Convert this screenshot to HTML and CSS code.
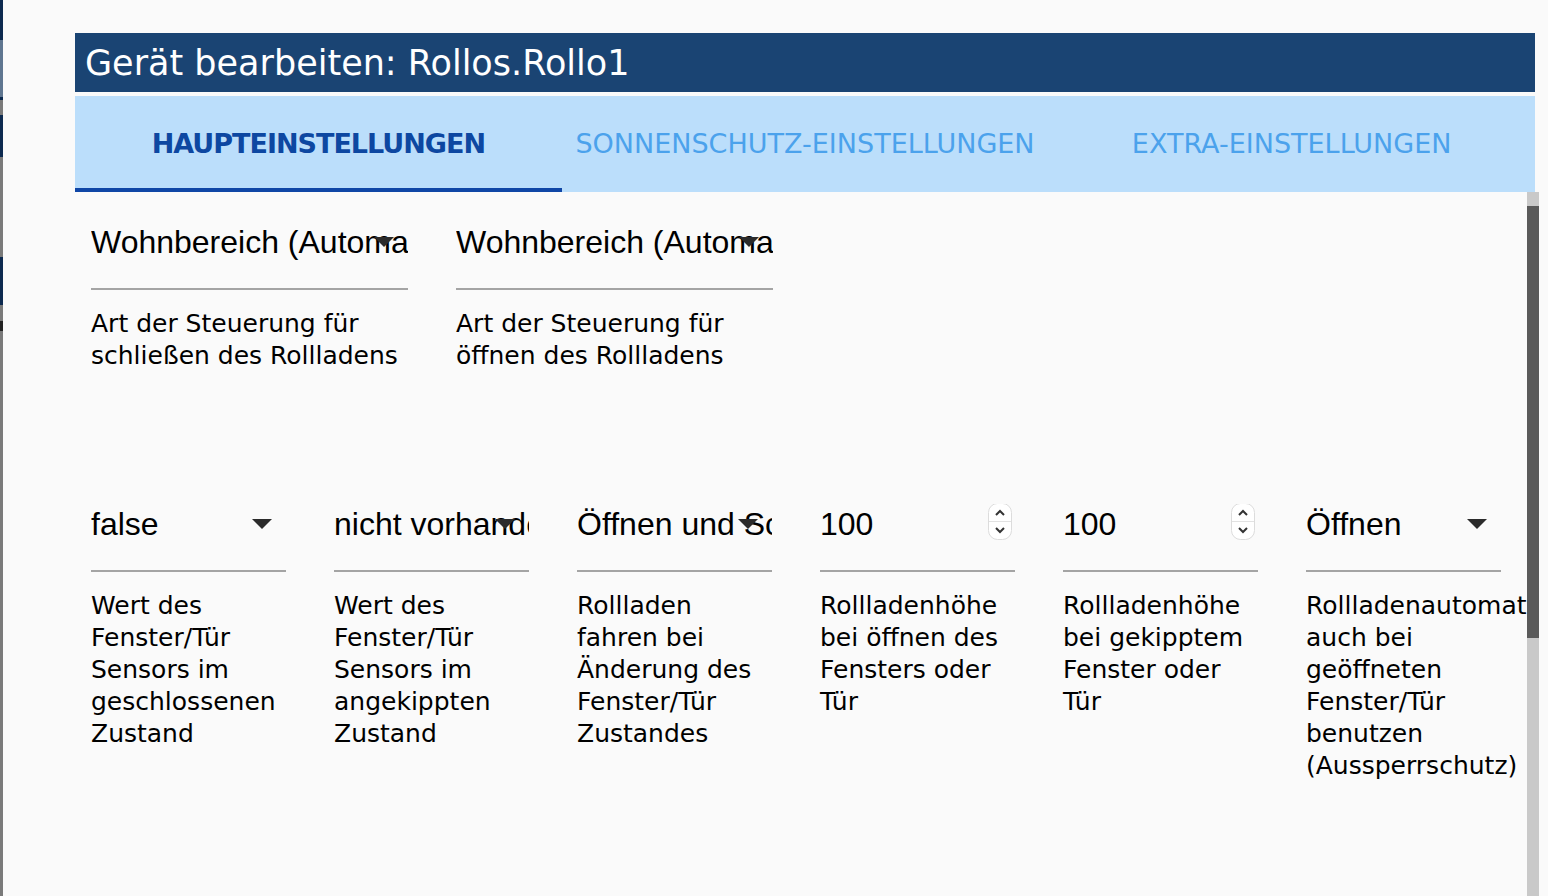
FILE: index.html
```html
<!DOCTYPE html>
<html lang="de">
	<head>
		<meta charset="UTF-8">
		<title>
			Gerät bearbeiten
		</title>
		<link rel="stylesheet" href="styles.css">
	</head>
	<body>
		<div class="page">
			<!-- Rand des Fensters dahinter -->
			<div class="strip">
				<span class="s-navy" style="height:40px"></span>
				<span class="s-slate" style="height:57px"></span>
				<span class="s-navy" style="height:3px"></span>
				<span class="s-grey" style="height:15px"></span>
				<span class="s-navy" style="height:42px"></span>
				<span class="s-grey" style="height:100px"></span>
				<span class="s-navy" style="height:48px"></span>
				<span class="s-grey" style="height:16px"></span>
				<span class="s-dark" style="height:10px"></span>
				<span class="s-grey" style="flex:1"></span>
			</div>

			<div class="dialog">
				<div class="title">
					Gerät bearbeiten: Rollos.Rollo1
				</div>
				<ul class="tabs">
					<li class="active">HAUPTEINSTELLUNGEN</li>
					<li>SONNENSCHUTZ-EINSTELLUNGEN</li>
					<li>EXTRA-EINSTELLUNGEN</li>
				</ul>

				<div class="body">
					<div class="content">
						<div class="row row-wide">
							<div class="field">
								<div class="value select">
									<span class="text">Wohnbereich (Automatik)</span>
									<i class="arrow"></i>
								</div>
								<div class="label">Art der Steuerung für schließen des Rollladens</div>
							</div>
							<div class="field">
								<div class="value select">
									<span class="text">Wohnbereich (Automatik)</span>
									<i class="arrow"></i>
								</div>
								<div class="label">Art der Steuerung für öffnen des Rollladens</div>
							</div>
						</div>

						<div class="row row-narrow">
							<div class="field">
								<div class="value select">
									<span class="text">false</span>
									<i class="arrow"></i>
								</div>
								<div class="label">Wert des Fenster/Tür Sensors im geschlossenen Zustand</div>
							</div>
							<div class="field">
								<div class="value select">
									<span class="text">nicht vorhanden</span>
									<i class="arrow"></i>
								</div>
								<div class="label">Wert des Fenster/Tür Sensors im angekippten Zustand</div>
							</div>
							<div class="field">
								<div class="value select">
									<span class="text">Öffnen und Schließen</span>
									<i class="arrow"></i>
								</div>
								<div class="label">Rollladen fahren bei Änderung des Fenster/Tür Zustandes</div>
							</div>
							<div class="field">
								<div class="value number">
									<span class="text">100</span>
									<svg class="spin" width="24" height="37" viewBox="0 0 24 37">
										<rect x="0.5" y="0.5" width="23" height="36" rx="9" fill="#fff" stroke="#dcdcdc"/>
										<line x1="1" y1="18.5" x2="23" y2="18.5" stroke="#e2e2e2"/>
										<polyline points="8,12 12,8 16,12" fill="none" stroke="#333" stroke-width="2"/>
										<polyline points="8,25 12,29 16,25" fill="none" stroke="#333" stroke-width="2"/>
									</svg>
								</div>
								<div class="label">Rollladenhöhe bei öffnen des Fensters oder Tür</div>
							</div>
							<div class="field">
								<div class="value number">
									<span class="text">100</span>
									<svg class="spin" width="24" height="37" viewBox="0 0 24 37">
										<rect x="0.5" y="0.5" width="23" height="36" rx="9" fill="#fff" stroke="#dcdcdc"/>
										<line x1="1" y1="18.5" x2="23" y2="18.5" stroke="#e2e2e2"/>
										<polyline points="8,12 12,8 16,12" fill="none" stroke="#333" stroke-width="2"/>
										<polyline points="8,25 12,29 16,25" fill="none" stroke="#333" stroke-width="2"/>
									</svg>
								</div>
								<div class="label">Rollladenhöhe bei gekipptem Fenster oder Tür</div>
							</div>
							<div class="field">
								<div class="value select">
									<span class="text">Öffnen</span>
									<i class="arrow"></i>
								</div>
								<div class="label">Rollladenautomatik auch bei geöffneten Fenster/Tür benutzen (Aussperrschutz)</div>
							</div>
						</div>
					</div>

					<!-- Scrollleiste -->
					<div class="scrollbar">
						<div class="thumb"></div>
					</div>
				</div>
			</div>
		</div>
	</body>
</html>
```

FILE: styles.css
```css
* { padding: 0; margin: 0; box-sizing: border-box; }
body { font: 25px "DejaVu Sans", "Noto Sans", sans-serif; background: #fafafa; color: #000; overflow: hidden; }
ul { list-style: none; }

.page { display: flex; height: 896px; }

/* Rand links */
.strip { width: 3px; display: flex; flex-direction: column; }
.strip span { display: block; }
.s-navy { background: #0d2a4f; }
.s-slate { background: #5f7690; }
.s-grey { background: #7a7a7a; }
.s-dark { background: #222; }

.dialog { margin-left: 72px; padding-top: 33px; width: 1464px; display: flex; flex-direction: column; }

/* Kopfzeile */
.title {
	width: 1460px;
	height: 59px;
	display: flex;
	align-items: center;
	padding-left: 10px;
	background: #1a4473;
	color: #fff;
	font-size: 35px;
}

/* Reiter */
.tabs { width: 1460px; height: 96px; margin-top: 4px; display: flex; background: #bbdefb; }
.tabs li {
	flex: 1;
	display: flex;
	align-items: center;
	justify-content: center;
	padding-top: 3px;
	font-size: 27px;
	color: #4ba2ec;
	border-bottom: 4px solid transparent;
}
.tabs li.active { color: #0d47a1; font-weight: bold; letter-spacing: -1px; border-bottom-color: #0f46a6; }

.body { flex: 1; display: flex; min-height: 0; }
.content { width: 1452px; overflow: hidden; padding: 30px 0 0 16px; }

.row { display: flex; gap: 48px; }
.row-wide .field { width: 317px; }
.row-narrow { margin-top: 132px; }
.row-narrow .field { width: 195px; flex-shrink: 0; }

/* Eingabefeld */
.value {
	position: relative;
	display: flex;
	justify-content: space-between;
	height: 68px;
	padding-bottom: 26px;
	font: 32px/40px "Liberation Sans", Arial, sans-serif;
	border-bottom: 2px solid #a4a4a4;
	overflow: hidden;
	white-space: nowrap;
}
.value .text { overflow: hidden; }
.arrow {
	position: absolute;
	right: 14px;
	top: 15px;
	width: 0;
	height: 0;
	border-left: 10px solid transparent;
	border-right: 10px solid transparent;
	border-top: 10px solid #2b2b2b;
}
.spin { flex-shrink: 0; margin: -1px 3px 0 0; }

.label { margin-top: 18px; line-height: 32px; white-space: normal; }

/* Scrollleiste */
.scrollbar { width: 12px; background: #c9c9c9; padding-top: 14px; }
.thumb { height: 432px; background: #5a5a5a; }
```
